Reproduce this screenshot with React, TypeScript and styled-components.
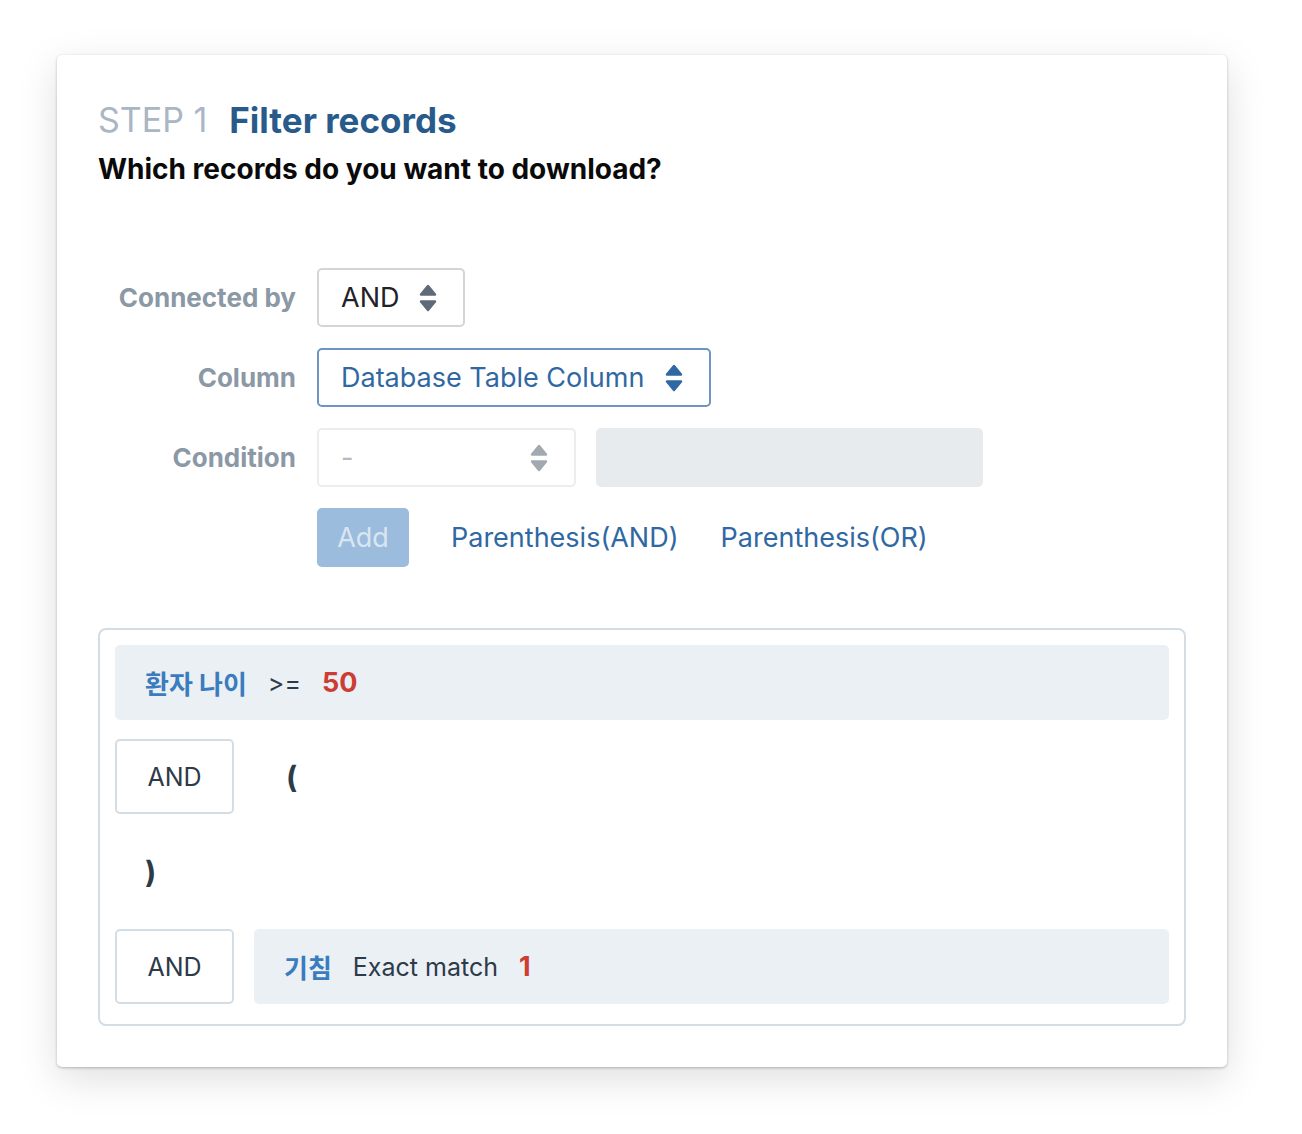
import styled, { createGlobalStyle } from "styled-components";

const GlobalStyle = createGlobalStyle`
  body {
    margin: 0;
    background: #ffffff;
    font-family: Inter, "Noto Sans CJK KR", sans-serif;
  }
`;

const Page = styled.div`
  padding: 55px 75px 66px 57px;
`;

const Card = styled.div`
  box-sizing: border-box;
  width: 1170px;
  padding: 42px 41px 41px 41px;
  background: #ffffff;
  border-radius: 5px;
  box-shadow: 0 1px 3px rgba(0, 0, 0, 0.25), 0 12px 40px rgba(0, 0, 0, 0.13);
`;

const Heading = styled.h1`
  margin: 0;
  font-size: 34px;
  line-height: 46px;
  font-weight: 400;
  display: flex;
  gap: 22px;
`;

const Step = styled.span`
  color: #a9b6c3;
`;

const Title = styled.span`
  color: #285b8b;
  font-weight: 700;
  font-size: 35px;
`;

const Question = styled.p`
  margin: 8px 0 0;
  font-size: 28px;
  line-height: 36px;
  font-weight: 700;
  color: #0a0a0a;
`;

const Form = styled.div`
  margin-top: 81px;
  display: flex;
  flex-direction: column;
  gap: 21px;
`;

const FormRow = styled.div`
  display: grid;
  grid-template-columns: 198px auto;
  column-gap: 21px;
  align-items: center;
`;

const Label = styled.label`
  text-align: right;
  font-size: 26px;
  font-weight: 700;
  color: #8b98a5;
`;

const Controls = styled.div`
  display: flex;
  align-items: center;
  gap: 20px;
`;

type Tone = "plain" | "active" | "disabled";

const selectBorder: Record<Tone, string> = {
  plain: "#d3d5d8",
  active: "#6e95bd",
  disabled: "#ebedef",
};
const selectText: Record<Tone, string> = {
  plain: "#1f2328",
  active: "#2f68a2",
  disabled: "#b3bac1",
};
const arrowColor: Record<Tone, string> = {
  plain: "#5e6a78",
  active: "#2f68a2",
  disabled: "#a3a9b0",
};

const SelectBox = styled.div<{ $tone: Tone; $width: number }>`
  box-sizing: border-box;
  width: ${(p) => p.$width}px;
  height: 59px;
  padding: 0 26px 0 22px;
  display: flex;
  align-items: center;
  justify-content: space-between;
  border: 2px solid ${(p) => selectBorder[p.$tone]};
  border-radius: 5px;
  background: #ffffff;
  font-size: 27px;
  color: ${(p) => selectText[p.$tone]};
`;

const DisabledInput = styled.div`
  width: 387px;
  height: 59px;
  border-radius: 5px;
  background: #e7ebee;
`;

const AddButton = styled.button`
  width: 92px;
  height: 59px;
  border: none;
  border-radius: 5px;
  background: #9bbcdc;
  color: #d9e6f2;
  font-family: inherit;
  font-size: 27px;
  padding: 0;
`;

const LinkButton = styled.span`
  font-size: 27px;
  color: #2f68a2;
  margin-left: 22px;
`;

const Results = styled.div`
  margin-top: 61px;
  border: 2px solid #d3dde6;
  border-radius: 8px;
  padding: 15px 15px 20px;
  display: flex;
  flex-direction: column;
  gap: 19px;
`;

const ResultRow = styled.div<{ $height?: number }>`
  display: flex;
  align-items: center;
  gap: 20px;
  min-height: ${(p) => p.$height ?? 75}px;
`;

const Connector = styled.div`
  box-sizing: border-box;
  width: 119px;
  height: 75px;
  border: 2px solid #d3dde6;
  border-radius: 5px;
  display: flex;
  align-items: center;
  justify-content: center;
  font-size: 25px;
  color: #2d3a48;
`;

const Condition = styled.div`
  flex: 1;
  height: 75px;
  box-sizing: border-box;
  padding: 0 30px;
  display: flex;
  align-items: center;
  gap: 21px;
  background: #ebf0f5;
  border-radius: 5px;
`;

const Field = styled.span`
  font-size: 26px;
  font-weight: 700;
  color: #3a7cbd;
`;

const Operator = styled.span`
  font-size: 25px;
  color: #2d3a48;
`;

const Value = styled.span`
  font-size: 27px;
  font-weight: 700;
  color: #cc3d33;
`;

const Paren = styled.span<{ $indent: number }>`
  font-size: 30px;
  font-weight: 700;
  color: #2d3a48;
  padding-left: ${(p) => p.$indent}px;
`;

function SortArrows({ color }: { color: string }) {
  return (
    <svg width="18" height="28" viewBox="0 0 18 28">
      <path
        d="M9 2 L16 10.5 H2 Z"
        fill={color}
        stroke={color}
        strokeWidth="2.5"
        strokeLinejoin="round"
      />
      <path
        d="M2 17.5 H16 L9 26 Z"
        fill={color}
        stroke={color}
        strokeWidth="2.5"
        strokeLinejoin="round"
      />
    </svg>
  );
}

function Select({
  value,
  tone,
  width,
}: {
  value: string;
  tone: Tone;
  width: number;
}) {
  return (
    <SelectBox $tone={tone} $width={width}>
      <span>{value}</span>
      <SortArrows color={arrowColor[tone]} />
    </SelectBox>
  );
}

export default function App() {
  return (
    <Page>
      <GlobalStyle />
      <Card>
        <Heading>
          <Step>STEP 1</Step>
          <Title>Filter records</Title>
        </Heading>
        <Question>Which records do you want to download?</Question>

        <Form>
          <FormRow>
            <Label>Connected by</Label>
            <Controls>
              <Select value="AND" tone="plain" width={148} />
            </Controls>
          </FormRow>
          <FormRow>
            <Label>Column</Label>
            <Controls>
              <Select value="Database Table Column" tone="active" width={394} />
            </Controls>
          </FormRow>
          <FormRow>
            <Label>Condition</Label>
            <Controls>
              <Select value="-" tone="disabled" width={259} />
              <DisabledInput />
            </Controls>
          </FormRow>
          <FormRow>
            <span />
            <Controls>
              <AddButton>Add</AddButton>
              <LinkButton>Parenthesis(AND)</LinkButton>
              <LinkButton>Parenthesis(OR)</LinkButton>
            </Controls>
          </FormRow>
        </Form>

        <Results>
          <ResultRow>
            <Condition>
              <Field>환자 나이</Field>
              <Operator>&gt;=</Operator>
              <Value>50</Value>
            </Condition>
          </ResultRow>
          <ResultRow>
            <Connector>AND</Connector>
            <Paren $indent={32}>(</Paren>
          </ResultRow>
          <ResultRow $height={77}>
            <Paren $indent={30}>)</Paren>
          </ResultRow>
          <ResultRow>
            <Connector>AND</Connector>
            <Condition>
              <Field>기침</Field>
              <Operator>Exact match</Operator>
              <Value>1</Value>
            </Condition>
          </ResultRow>
        </Results>
      </Card>
    </Page>
  );
}
